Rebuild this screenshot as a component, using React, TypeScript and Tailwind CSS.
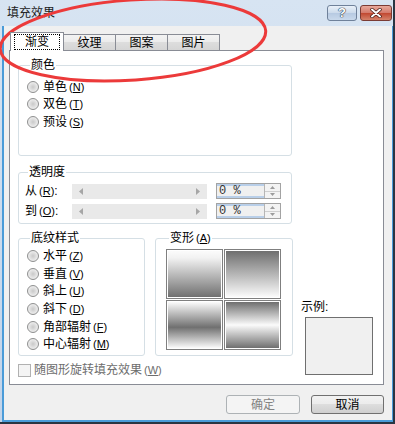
import React from 'react';

const font = "font-['Liberation_Sans','Noto_Sans_CJK_SC',sans-serif]";

const Key = ({ k }: { k: string }) => (
  <span className="ml-[2px] text-[11px]">
    (<span className="underline">{k}</span>)
  </span>
);

const Radio = ({ label, k, h }: { label: string; k: string; h: string }) => (
  <div className={`flex items-center gap-[4px] ${h}`}>
    <span className="h-[12px] w-[12px] shrink-0 rounded-full border border-[#8e8f8f] bg-[radial-gradient(circle_at_50%_50%,#c9c9c9_0%,#e6e6e6_55%,#f7f7f7_100%)]" />
    <span>
      {label}
      <Key k={k} />
    </span>
  </div>
);

const Group = ({
  title,
  className,
  children,
}: {
  title: React.ReactNode;
  className: string;
  children: React.ReactNode;
}) => (
  <fieldset className={`rounded-[3px] border border-[#d5dfe5] ${className}`}>
    <legend className="ml-[3px] px-[1px] leading-[16px]">{title}</legend>
    {children}
  </fieldset>
);

const Slider = () => (
  <div className="flex h-[15px] w-[135px] items-center justify-between bg-[#e9e9e9] px-[7px]">
    <svg width="4" height="7" viewBox="0 0 4 7">
      <path d="M4 0 L0 3.5 L4 7 Z" fill="#a6a6a6" />
    </svg>
    <svg width="4" height="7" viewBox="0 0 4 7">
      <path d="M0 0 L4 3.5 L0 7 Z" fill="#a6a6a6" />
    </svg>
  </div>
);

const Spinner = () => (
  <div className="flex h-[16px] w-[65px] border border-[#a3a3a3]">
    <div className="flex flex-1 items-center border-y-2 border-[#b9cfe9] bg-[#f0f0f0] pl-[2px] font-['Liberation_Mono',monospace] text-[12px] leading-[12px] text-[#333]">
      0 %
    </div>
    <div className="flex w-[16px] flex-col border-l border-[#b5b5b5] bg-[#f3f3f3]">
      <div className="flex flex-1 items-center justify-center border-b border-[#cfcfcf]">
        <svg width="5" height="3" viewBox="0 0 5 3">
          <path d="M0 3 L2.5 0 L5 3 Z" fill="#9c9c9c" />
        </svg>
      </div>
      <div className="flex flex-1 items-center justify-center">
        <svg width="5" height="3" viewBox="0 0 5 3">
          <path d="M0 0 L2.5 3 L5 0 Z" fill="#9c9c9c" />
        </svg>
      </div>
    </div>
  </div>
);

const tiles = [
  'bg-[linear-gradient(to_bottom,#fbfbfb_0%,#f2f2f2_15%,#707070_100%)]',
  'bg-[linear-gradient(to_bottom,#6f6f6f_0%,#fbfbfb_100%)]',
  'bg-[linear-gradient(to_bottom,#fbfbfb_0%,#707070_55%,#fbfbfb_100%)]',
  'bg-[linear-gradient(to_bottom,#6f6f6f_0%,#fbfbfb_50%,#6f6f6f_100%)]',
];

const patterns: [string, string][] = [
  ['水平', 'Z'],
  ['垂直', 'V'],
  ['斜上', 'U'],
  ['斜下', 'D'],
  ['角部辐射', 'F'],
  ['中心辐射', 'M'],
];

export default function App() {
  return (
    <div
      className={`relative flex h-[424px] w-[395px] flex-col overflow-hidden border-r-2 border-b-2 border-[#2a3542] bg-[linear-gradient(to_bottom,#d7e4f2,#c2d4ea)] text-[12px] text-black ${font}`}
    >
      {/* title bar */}
      <div className="flex h-[26px] items-center justify-between pl-[7px] pr-[1px]">
        <span className="leading-[16px] text-[#1b1b1b]">填充效果</span>
        <div className="flex items-center gap-[3px]">
          <div className="flex h-[16px] w-[30px] items-center justify-center rounded-[3px] border border-[#6f819a] bg-[linear-gradient(to_bottom,#eaf1f9,#cbdaeb_50%,#b6c9e1_50%,#c9d9ec)] text-[13px] font-bold leading-[14px] text-white [text-shadow:0_0_1px_#25354a,0_0_1px_#25354a,0_0_1px_#25354a]">
            ?
          </div>
          <div className="flex h-[16px] w-[32px] items-center justify-center rounded-[3px] border border-[#7a3b34] bg-[linear-gradient(to_bottom,#e8a99c,#d3796a_50%,#c0462f_50%,#d5836b)]">
            <svg width="12" height="10" viewBox="0 0 12 10">
              <path d="M2 1.5 L10 8.5 M10 1.5 L2 8.5" stroke="#3d1510" strokeWidth="3.4" strokeLinecap="round" />
              <path d="M2 1.5 L10 8.5 M10 1.5 L2 8.5" stroke="#ffffff" strokeWidth="2" strokeLinecap="round" />
            </svg>
          </div>
        </div>
      </div>

      {/* body */}
      <div className="ml-[2px] flex flex-1 flex-col border-l-2 border-r border-b-2 border-[#4a9bd8] bg-[#f0f0f0] pl-[5px] pt-[6px]">
        {/* tabs */}
        <div className="flex h-[18px] items-end pl-[1px]">
          <div className="relative z-10 -mb-[1px] flex h-[19px] w-[54px] items-center justify-center border border-b-0 border-[#898c95] bg-white">
            <span className="border border-dotted border-black px-[10px] leading-[14px]">渐变</span>
          </div>
          {['纹理', '图案', '图片'].map((t) => (
            <div
              key={t}
              className="-ml-[1px] flex h-[16px] w-[53px] items-center justify-center border border-b-0 border-[#898c95] bg-[linear-gradient(to_bottom,#f3f3f3,#ebebeb_50%,#dddddd_50%,#d5d5d5)] leading-[14px]"
            >
              {t}
            </div>
          ))}
        </div>

        {/* tab panel */}
        <div className="flex h-[335px] w-[375px] border border-[#898c95] bg-white pl-[8px] pt-[6px]">
          <div className="flex w-[275px] flex-col">
            <Group title="颜色" className="h-[99px] w-[274px] pl-[8px] pt-[5px]">
              <Radio label="单色" k="N" h="h-[17.5px]" />
              <Radio label="双色" k="T" h="h-[17.5px]" />
              <Radio label="预设" k="S" h="h-[17.5px]" />
            </Group>

            <Group title="透明度" className="mt-[8px] h-[60px] w-[274px] pl-[6px] pt-[3px]">
              <div className="flex flex-col gap-[4px]">
                {[
                  ['从', 'R'],
                  ['到', 'O'],
                ].map(([l, k]) => (
                  <div key={k} className="flex h-[16px] items-center">
                    <span className="w-[47px] leading-[16px]">
                      {l}
                      <Key k={k} />:
                    </span>
                    <Slider />
                    <div className="ml-[9px]">
                      <Spinner />
                    </div>
                  </div>
                ))}
              </div>
            </Group>

            <div className="mt-[6px] flex gap-[10px]">
              <Group title="底纹样式" className="h-[126px] w-[127px] pl-[8px] pt-[1px]">
                {patterns.map(([l, k]) => (
                  <Radio key={k} label={l} k={k} h="h-[17.7px]" />
                ))}
              </Group>
              <Group
                title={
                  <>
                    变形
                    <Key k="A" />
                  </>
                }
                className="h-[126px] w-[138px] pl-[10px] pt-[3px]"
              >
                <div className="grid w-[115px] grid-cols-2 gap-[1px]">
                  {tiles.map((g, i) => (
                    <div key={i} className="h-[50px] w-[57px] border border-[#7f7f7f] bg-white p-[1px]">
                      <div className={`h-full w-full ${g}`} />
                    </div>
                  ))}
                </div>
              </Group>
            </div>

            <div className="mt-[8px] flex items-center gap-[3px] text-[#6d6d6d]">
              <span className="h-[13px] w-[13px] border border-[#b1b1b1] bg-[#f4f4f4]" />
              <span className="leading-[13px]">
                随图形旋转填充效果
                <Key k="W" />
              </span>
            </div>
          </div>

          <div className="mb-[9px] ml-[8px] flex flex-col self-end">
            <span className="leading-[16px]">示例:</span>
            <div className="ml-[4px] mt-[2px] h-[58px] w-[68px] border border-[#6f6f6f] bg-[#f0f0f0]" />
          </div>
        </div>

        {/* buttons */}
        <div className="mt-[10px] flex w-[375px] justify-end gap-[11px]">
          <div className="flex h-[19px] w-[74px] items-center justify-center rounded-[3px] border border-[#adb2b5] bg-[#f4f4f4] text-[#838383]">
            确定
          </div>
          <div className="flex h-[19px] w-[73px] items-center justify-center rounded-[3px] border border-[#707070] bg-[linear-gradient(to_bottom,#f2f2f2,#ebebeb_50%,#dddddd_50%,#cfcfcf)]">
            取消
          </div>
        </div>
      </div>

      {/* red annotation ellipse */}
      <svg className="pointer-events-none absolute left-0 top-0" width="395" height="424" viewBox="0 0 395 424">
        <ellipse
          cx="133"
          cy="40"
          rx="133"
          ry="40"
          transform="rotate(-4 133 40)"
          fill="none"
          stroke="#ec3a3a"
          strokeWidth="3"
        />
      </svg>
    </div>
  );
}
